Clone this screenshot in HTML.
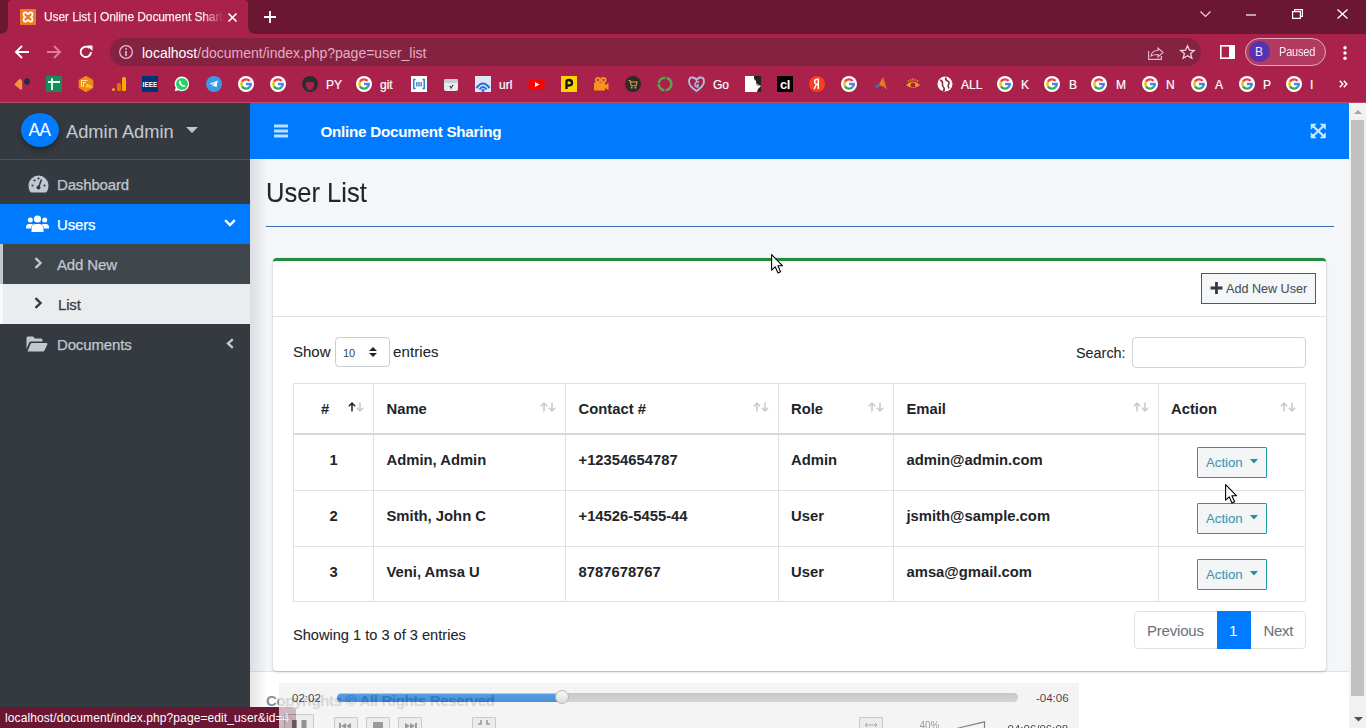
<!DOCTYPE html>
<html><head><meta charset="utf-8">
<style>
*{margin:0;padding:0;box-sizing:border-box}
html,body{width:1366px;height:728px;overflow:hidden;font-family:"Liberation Sans",sans-serif;background:#f4f6f9}
.a{position:absolute}
.t{position:absolute;white-space:nowrap;line-height:1}
svg{position:absolute;overflow:visible}
/* chrome */
#titlebar{left:0;top:0;width:1366px;height:34px;background:#6b1733}
#tab{left:8px;top:0;width:240px;height:34px;background:#aa224c;border-radius:4px 4px 0 0}
#toolbar{left:0;top:34px;width:1366px;height:68px;background:#aa224c}
#omni{left:110px;top:38px;width:1091px;height:28px;background:#842242;border-radius:14px}
#sep{left:0;top:102px;width:1366px;height:1px;background:#b84a67}
.bm{color:#fff;font-size:12px;-webkit-text-stroke:0.2px #fff}
/* page */
#sidebar{left:0;top:103px;width:250px;height:625px;background:#343a40}
#navbar{left:250px;top:103px;width:1099px;height:56px;background:#007bff}
#content{left:250px;top:159px;width:1099px;height:512px;background:#f4f6f9}
#shadow{left:250px;top:159px;width:18px;height:569px;background:linear-gradient(90deg,rgba(0,0,0,.10),rgba(0,0,0,0))}
#scroll{left:1349px;top:103px;width:17px;height:625px;background:#f1f1f1}
#thumb{left:1351px;top:120px;width:13px;height:576px;background:#c1c1c1}
#footer{left:250px;top:671px;width:1099px;height:57px;background:#fff;border-top:1px solid #dee2e6}
.st{-webkit-text-stroke:0.08px currentColor}
.sb{color:#c2c7d0;font-size:15px;letter-spacing:-0.15px;-webkit-text-stroke:0.25px currentColor}
</style></head><body>
<!-- ============ BROWSER CHROME ============ -->
<div id="titlebar" class="a"></div>
<div id="toolbar" class="a"></div>
<div id="tab" class="a"></div>
<!-- tab bottom flares -->
<svg style="left:0;top:26px" width="8" height="8"><path d="M0 8 Q8 8 8 0 L8 8 Z" fill="#aa224c"/></svg>
<svg style="left:248px;top:26px" width="8" height="8"><path d="M8 8 Q0 8 0 0 L0 8 Z" fill="#aa224c"/></svg>
<!-- favicon -->
<svg style="left:20px;top:9px" width="16" height="16" viewBox="0 0 16 16"><rect width="16" height="16" fill="#ef7a22"/><path d="M3.5 5.5 Q3.5 3 6 3.5 L8 5 L10 3.5 Q12.5 3 12.5 5.5 Q12.5 7 11 8 Q12.5 9 12.5 10.5 Q12.5 13 10 12.5 L8 11 L6 12.5 Q3.5 13 3.5 10.5 Q3.5 9 5 8 Q3.5 7 3.5 5.5 Z" fill="none" stroke="#fff" stroke-width="1.8"/></svg>
<div class="t" style="left:44px;top:11px;font-size:12px;color:#fbe9ef;width:180px;overflow:hidden;letter-spacing:-0.1px;-webkit-text-stroke:0.25px #fbe9ef;-webkit-mask-image:linear-gradient(90deg,#000 158px,transparent 180px)">User List | Online Document Sharing</div>
<svg style="left:228px;top:13px" width="9" height="9"><path d="M0.5 0.5L8.5 8.5M8.5 0.5L0.5 8.5" stroke="#fff" stroke-width="1.6"/></svg>
<svg style="left:264px;top:11px" width="12" height="12"><path d="M6 0V12M0 6H12" stroke="#fff" stroke-width="1.8"/></svg>
<!-- window controls -->
<svg style="left:1200px;top:11px" width="11" height="7"><path d="M0.5 0.5L5.5 5.5L10.5 0.5" fill="none" stroke="#f3d7df" stroke-width="1.2"/></svg>
<svg style="left:1246px;top:14px" width="10" height="2"><path d="M0 1H10" stroke="#fff" stroke-width="1.2"/></svg>
<svg style="left:1292px;top:9px" width="11" height="10"><path d="M0.6 2.6H8.4V9.4H0.6Z M2.6 2.6V0.6H10.4V7.4H8.4" fill="none" stroke="#fff" stroke-width="1.2"/></svg>
<svg style="left:1337px;top:9px" width="11" height="10"><path d="M0.5 0.5L10.5 9.5M10.5 0.5L0.5 9.5" stroke="#fff" stroke-width="1.3"/></svg>
<!-- toolbar -->
<svg style="left:15px;top:45px" width="14" height="14"><path d="M7 1L1 7L7 13M1 7H14" fill="none" stroke="#fff" stroke-width="1.9"/></svg>
<svg style="left:47px;top:45px" width="14" height="14"><path d="M7 1L13 7L7 13M13 7H0" fill="none" stroke="#e27a98" stroke-width="1.9"/></svg>
<svg style="left:79px;top:45px" width="14" height="14"><path d="M12 7A5.2 5.2 0 1 1 10.5 3.2" fill="none" stroke="#fff" stroke-width="1.9"/><path d="M8 0.5H13.5V6Z" fill="#fff"/></svg>
<div id="omni" class="a"></div>
<svg style="left:119px;top:45px" width="14" height="14"><circle cx="7" cy="7" r="6.3" fill="none" stroke="#e9bccb" stroke-width="1.3"/><path d="M7 6V11" stroke="#e9bccb" stroke-width="1.6"/><circle cx="7" cy="3.9" r="0.9" fill="#e9bccb"/></svg>
<div class="t" style="left:142px;top:46px;font-size:14px;color:#fff">localhost<span style="color:#e4adc0">/document/index.php?page=user_list</span></div>
<svg style="left:1148px;top:46px" width="16" height="14"><path d="M0.6 5V13.4H13.4V10" fill="none" stroke="#e5b3c3" stroke-width="1.2"/><path d="M3 10Q4 4.5 10 4.5V2L15 6.5L10 11V8.5Q5.5 8.5 3 10Z" fill="none" stroke="#e5b3c3" stroke-width="1.2"/></svg>
<svg style="left:1180px;top:45px" width="15" height="14"><path d="M7.5 0.8L9.5 5.2L14.2 5.5L10.6 8.6L11.8 13.2L7.5 10.7L3.2 13.2L4.4 8.6L0.8 5.5L5.5 5.2Z" fill="none" stroke="#f1d3dc" stroke-width="1.3"/></svg>
<svg style="left:1220px;top:45px" width="15" height="14"><rect x="0.8" y="0.8" width="13.4" height="12.4" fill="none" stroke="#fff" stroke-width="1.6"/><rect x="9" y="1" width="5" height="12" fill="#fff"/></svg>
<div class="a" style="left:1245px;top:38px;width:81px;height:28px;border:1.3px solid #e7a9bd;border-radius:14px;background:#b23a60"></div>
<div class="a" style="left:1249px;top:41px;width:21px;height:21px;border-radius:50%;background:#5533b0"></div>
<div class="t" style="left:1255px;top:46px;font-size:12px;color:#f0e6ff">B</div>
<div class="t" style="left:1279px;top:46px;font-size:12.5px;color:#fbeef3;letter-spacing:-0.2px;transform:scaleX(.88);transform-origin:0 0">Paused</div>
<svg style="left:1343px;top:46px" width="4" height="14"><circle cx="2" cy="1.8" r="1.7" fill="#fff"/><circle cx="2" cy="7" r="1.7" fill="#fff"/><circle cx="2" cy="12.2" r="1.7" fill="#fff"/></svg>
<!-- BOOKMARKS -->
<svg style="left:14px;top:76px" width="16" height="16"><path d="M5 3.2Q6 2.8 7 3.5L8.2 5V12.5Q7.5 14 6.5 13.8L0.8 9Q0.3 8.4 0.9 7.7Z" fill="#f4953e"/><ellipse cx="13" cy="5.5" rx="2.8" ry="3.2" fill="#1d3040"/></svg>
<svg style="left:46px;top:76px" width="16" height="16"><rect width="16" height="16" fill="#1a8a5a"/><path d="M2 6H14M6 2.2V14" stroke="#e8fff4" stroke-width="1.8"/></svg>
<svg style="left:78px;top:76px" width="16" height="16"><path d="M8 0.3L14.8 4.2V11.8L8 15.7L1.2 11.8V4.2Z" fill="#f08c12" stroke="#f08c12" stroke-linejoin="round" stroke-width="1"/><path d="M3.5 11V4.5H9.5M5.5 11V6.5H8" fill="none" stroke="#ffe98a" stroke-width="1.1"/><path d="M9 8V11.5M11 8.5V11.5M13 9.5V11.5" stroke="#ffe98a" stroke-width="1.1"/></svg>
<svg style="left:111px;top:76px" width="16" height="16"><rect x="1" y="12" width="3" height="3" rx="1.5" fill="#f9ab00"/><rect x="6" y="7" width="4" height="8" rx="1.5" fill="#e37400"/><rect x="11" y="1" width="4" height="14" rx="1.5" fill="#f9ab00"/></svg>
<svg style="left:142px;top:76px" width="16" height="16"><rect width="16" height="16" fill="#00337a"/><text x="8" y="11" font-size="6.5" font-family="Liberation Sans" fill="#fff" text-anchor="middle" font-weight="700">IEEE</text></svg>
<svg style="left:174px;top:76px" width="16" height="16"><path d="M8 0.6A7.3 7.3 0 0 0 1.7 11.6L0.8 15.2L4.4 14.3A7.3 7.3 0 1 0 8 0.6Z" fill="#fff"/><circle cx="8" cy="7.9" r="6" fill="#25d366"/><path d="M5.5 4.8Q6.2 4.3 6.6 5.2L7.1 6.3Q7.2 6.7 6.8 7.1Q7.6 8.7 9.1 9.3Q9.5 8.8 9.9 9L11 9.6Q11.5 10 10.8 10.8Q9.8 11.6 7.6 10.3Q5.4 8.8 5 6.8Q4.8 5.4 5.5 4.8Z" fill="#fff"/></svg>
<svg style="left:206px;top:76px" width="16" height="16"><circle cx="8" cy="8" r="8" fill="#3b9ae1"/><path d="M3.4 7.8L11.8 4.4L10.4 11.6L7.6 9.6L6.4 10.8L6.5 8.9L10.3 5.6L5.6 8.5Z" fill="#fff"/></svg>
<svg style="left:238px;top:76px" width="16" height="16" viewBox="0 0 16 16"><circle cx="8" cy="8" r="8" fill="#fff"/><g fill="none" stroke-width="2.4"><path d="M11.56 5.01A4.65 4.65 0 0 0 3.97 5.68" stroke="#ea4335"/><path d="M3.97 5.68A4.65 4.65 0 0 0 3.97 10.33" stroke="#fbbc05"/><path d="M3.97 10.33A4.65 4.65 0 0 0 11.56 10.99" stroke="#34a853"/><path d="M11.56 10.99A4.65 4.65 0 0 0 12.65 8" stroke="#4285f4"/></g><rect x="8" y="6.8" width="5.85" height="2.4" fill="#4285f4"/></svg>
<svg style="left:270px;top:76px" width="16" height="16" viewBox="0 0 16 16"><circle cx="8" cy="8" r="8" fill="#fff"/><g fill="none" stroke-width="2.4"><path d="M11.56 5.01A4.65 4.65 0 0 0 3.97 5.68" stroke="#ea4335"/><path d="M3.97 5.68A4.65 4.65 0 0 0 3.97 10.33" stroke="#fbbc05"/><path d="M3.97 10.33A4.65 4.65 0 0 0 11.56 10.99" stroke="#34a853"/><path d="M11.56 10.99A4.65 4.65 0 0 0 12.65 8" stroke="#4285f4"/></g><rect x="8" y="6.8" width="5.85" height="2.4" fill="#4285f4"/></svg>
<svg style="left:302px;top:76px" width="16" height="16"><circle cx="8" cy="8" r="8" fill="#2b2b30"/><path d="M5.2 13.8V11.6Q3.6 11.5 3.6 9.2Q3.6 8.1 4.3 7.4Q4 6.5 4.4 5.5Q5.3 5.5 6.3 6.2Q8 5.7 9.7 6.2Q10.7 5.5 11.6 5.5Q12 6.5 11.7 7.4Q12.4 8.1 12.4 9.2Q12.4 11.5 10.8 11.6V13.8Z" fill="#a8224b"/></svg>
<div class="t bm" style="left:326px;top:78.5px">PY</div>
<svg style="left:356px;top:76px" width="16" height="16" viewBox="0 0 16 16"><circle cx="8" cy="8" r="8" fill="#fff"/><g fill="none" stroke-width="2.4"><path d="M11.56 5.01A4.65 4.65 0 0 0 3.97 5.68" stroke="#ea4335"/><path d="M3.97 5.68A4.65 4.65 0 0 0 3.97 10.33" stroke="#fbbc05"/><path d="M3.97 10.33A4.65 4.65 0 0 0 11.56 10.99" stroke="#34a853"/><path d="M11.56 10.99A4.65 4.65 0 0 0 12.65 8" stroke="#4285f4"/></g><rect x="8" y="6.8" width="5.85" height="2.4" fill="#4285f4"/></svg>
<div class="t bm" style="left:380px;top:78.5px">git</div>
<svg style="left:411px;top:76px" width="16" height="16"><rect width="16" height="16" fill="#fff"/><path d="M4.5 3.5H2.8V12.5H4.5M11.5 3.5H13.2V12.5H11.5" fill="none" stroke="#2b79c9" stroke-width="1.4"/><path d="M5.8 6V10.5M8 6V10.5M10.2 6V10.5" stroke="#2b79c9" stroke-width="1.3"/></svg>
<svg style="left:443px;top:76px" width="16" height="16"><rect x="1" y="3" width="14" height="12" rx="2" fill="#e8eaf0"/><rect x="1" y="3" width="14" height="4" rx="1.5" fill="#c9cbd6"/><path d="M7 10L8 12L10 9" stroke="#444" stroke-width="1.3" fill="none"/></svg>
<svg style="left:475px;top:76px" width="16" height="16"><rect width="16" height="16" fill="#dfe7f2"/><path d="M1.5 12Q8 3 14.5 12" fill="none" stroke="#2a6de0" stroke-width="2.2"/><path d="M4.5 13.5Q8 8.5 11.5 13.5" fill="none" stroke="#2a6de0" stroke-width="2"/><circle cx="8" cy="14.5" r="1.5" fill="#2a6de0"/></svg>
<div class="t bm" style="left:499px;top:78.5px">url</div>
<svg style="left:528px;top:76px" width="17" height="16"><rect x="0.5" y="3" width="16" height="11" rx="3" fill="#f00"/><path d="M7 6L11.5 8.5L7 11Z" fill="#fff"/></svg>
<svg style="left:561px;top:76px" width="16" height="16"><rect width="16" height="16" fill="#ffd400"/><path d="M5.5 13V5.5Q5.5 4 8 4Q11 4 11 6.8Q11 9.5 8 9.5H6.5" fill="none" stroke="#111" stroke-width="2.3"/></svg>
<svg style="left:593px;top:76px" width="16" height="16"><circle cx="5" cy="4" r="3" fill="#f7931e"/><circle cx="10.5" cy="4" r="3" fill="#f7931e"/><rect x="1" y="6.5" width="11" height="8" fill="#f7931e"/><path d="M12 9L15.5 7V14L12 12Z" fill="#f7931e"/><circle cx="5" cy="4" r="1.1" fill="#a8224b"/><circle cx="10.5" cy="4" r="1.1" fill="#a8224b"/></svg>
<svg style="left:625px;top:76px" width="16" height="16"><circle cx="8" cy="8" r="8" fill="#2d2a2e"/><path d="M3.5 4.5H5L6.3 9.8H11L12 6H5.6" fill="none" stroke="#e8a13a" stroke-width="1.1"/><circle cx="6.8" cy="11.7" r="0.9" fill="#e8a13a"/><circle cx="10.5" cy="11.7" r="0.9" fill="#e8a13a"/></svg>
<svg style="left:657px;top:76px" width="16" height="16"><circle cx="8" cy="8" r="6.3" fill="none" stroke="#5ea24e" stroke-width="2.6" stroke-dasharray="9 1.2"/></svg>
<svg style="left:688px;top:76px" width="17" height="16"><path d="M8.5 15Q1 10 1 5.5Q1 1 5 1.5Q7.3 2 8.5 4Q9.7 2 12 1.5Q16 1 16 5.5Q16 10 8.5 15Z" fill="none" stroke="#aac6e4" stroke-width="1.8"/><path d="M11 6Q8 5 7 8Q6.5 11 10 11V9H8.5" fill="none" stroke="#aac6e4" stroke-width="1.4"/></svg>
<div class="t bm" style="left:713px;top:78.5px">Go</div>
<svg style="left:745px;top:76px" width="16" height="16"><rect width="16" height="16" fill="#fff"/><path d="M9 0H16V16H12Q13 12 16 10L11 8Q12 5 9 3Z" fill="#222"/><path d="M11 7L16 10L12 10Z" fill="#e0a020"/></svg>
<svg style="left:777px;top:76px" width="16" height="16"><rect width="16" height="16" fill="#000"/><text x="8" y="13" font-size="13" font-family="Liberation Sans" font-weight="700" fill="#fff" text-anchor="middle" letter-spacing="-0.5">cl</text></svg>
<svg style="left:809px;top:76px" width="16" height="16"><circle cx="8" cy="8" r="8" fill="#fc3f1d"/><path d="M9.3 13V3.2H8.3Q5.6 3.2 5.6 5.8Q5.6 7.8 7.4 8.3L5.2 13M9.3 8.4H8" fill="none" stroke="#fff" stroke-width="1.5"/></svg>
<svg style="left:841px;top:76px" width="16" height="16" viewBox="0 0 16 16"><circle cx="8" cy="8" r="8" fill="#fff"/><g fill="none" stroke-width="2.4"><path d="M11.56 5.01A4.65 4.65 0 0 0 3.97 5.68" stroke="#ea4335"/><path d="M3.97 5.68A4.65 4.65 0 0 0 3.97 10.33" stroke="#fbbc05"/><path d="M3.97 10.33A4.65 4.65 0 0 0 11.56 10.99" stroke="#34a853"/><path d="M11.56 10.99A4.65 4.65 0 0 0 12.65 8" stroke="#4285f4"/></g><rect x="8" y="6.8" width="5.85" height="2.4" fill="#4285f4"/></svg>
<svg style="left:873px;top:76px" width="15" height="16"><path d="M1 10L6 8L8 10L4 12Z" fill="#3e6fb6"/><path d="M6 8L10 1Q12 6 14 14Q11 10 8 10Z" fill="#e07a1f"/></svg>
<svg style="left:905px;top:76px" width="16" height="16"><path d="M1 9Q8 2 15 9Q8 15 1 9Z" fill="#f0a020"/><circle cx="8" cy="9" r="2.5" fill="#b01f3c"/><path d="M3 4L4 6M8 2V4.5M13 4L12 6M5.5 3L6 5M10.5 3L10 5" stroke="#f0a020" stroke-width="1"/></svg>
<svg style="left:937px;top:76px" width="16" height="16"><circle cx="8" cy="8" r="7.5" fill="#fff"/><path d="M3 4Q6 5 5.5 8Q5 10 7 12Q8 14 6 15M9 1.5Q8 4 10.5 5Q13 6 11.5 8.5Q10.5 10 12 12.5" fill="none" stroke="#8a2748" stroke-width="1.6"/></svg>
<div class="t bm" style="left:961px;top:78.5px">ALL</div>
<svg style="left:997px;top:76px" width="16" height="16" viewBox="0 0 16 16"><circle cx="8" cy="8" r="8" fill="#fff"/><g fill="none" stroke-width="2.4"><path d="M11.56 5.01A4.65 4.65 0 0 0 3.97 5.68" stroke="#ea4335"/><path d="M3.97 5.68A4.65 4.65 0 0 0 3.97 10.33" stroke="#fbbc05"/><path d="M3.97 10.33A4.65 4.65 0 0 0 11.56 10.99" stroke="#34a853"/><path d="M11.56 10.99A4.65 4.65 0 0 0 12.65 8" stroke="#4285f4"/></g><rect x="8" y="6.8" width="5.85" height="2.4" fill="#4285f4"/></svg>
<div class="t bm" style="left:1021px;top:78.5px">K</div>
<svg style="left:1044px;top:76px" width="16" height="16" viewBox="0 0 16 16"><circle cx="8" cy="8" r="8" fill="#fff"/><g fill="none" stroke-width="2.4"><path d="M11.56 5.01A4.65 4.65 0 0 0 3.97 5.68" stroke="#ea4335"/><path d="M3.97 5.68A4.65 4.65 0 0 0 3.97 10.33" stroke="#fbbc05"/><path d="M3.97 10.33A4.65 4.65 0 0 0 11.56 10.99" stroke="#34a853"/><path d="M11.56 10.99A4.65 4.65 0 0 0 12.65 8" stroke="#4285f4"/></g><rect x="8" y="6.8" width="5.85" height="2.4" fill="#4285f4"/></svg>
<div class="t bm" style="left:1069px;top:78.5px">B</div>
<svg style="left:1091px;top:76px" width="16" height="16" viewBox="0 0 16 16"><circle cx="8" cy="8" r="8" fill="#fff"/><g fill="none" stroke-width="2.4"><path d="M11.56 5.01A4.65 4.65 0 0 0 3.97 5.68" stroke="#ea4335"/><path d="M3.97 5.68A4.65 4.65 0 0 0 3.97 10.33" stroke="#fbbc05"/><path d="M3.97 10.33A4.65 4.65 0 0 0 11.56 10.99" stroke="#34a853"/><path d="M11.56 10.99A4.65 4.65 0 0 0 12.65 8" stroke="#4285f4"/></g><rect x="8" y="6.8" width="5.85" height="2.4" fill="#4285f4"/></svg>
<div class="t bm" style="left:1116px;top:78.5px">M</div>
<svg style="left:1142px;top:76px" width="16" height="16" viewBox="0 0 16 16"><circle cx="8" cy="8" r="8" fill="#fff"/><g fill="none" stroke-width="2.4"><path d="M11.56 5.01A4.65 4.65 0 0 0 3.97 5.68" stroke="#ea4335"/><path d="M3.97 5.68A4.65 4.65 0 0 0 3.97 10.33" stroke="#fbbc05"/><path d="M3.97 10.33A4.65 4.65 0 0 0 11.56 10.99" stroke="#34a853"/><path d="M11.56 10.99A4.65 4.65 0 0 0 12.65 8" stroke="#4285f4"/></g><rect x="8" y="6.8" width="5.85" height="2.4" fill="#4285f4"/></svg>
<div class="t bm" style="left:1166px;top:78.5px">N</div>
<svg style="left:1191px;top:76px" width="16" height="16" viewBox="0 0 16 16"><circle cx="8" cy="8" r="8" fill="#fff"/><g fill="none" stroke-width="2.4"><path d="M11.56 5.01A4.65 4.65 0 0 0 3.97 5.68" stroke="#ea4335"/><path d="M3.97 5.68A4.65 4.65 0 0 0 3.97 10.33" stroke="#fbbc05"/><path d="M3.97 10.33A4.65 4.65 0 0 0 11.56 10.99" stroke="#34a853"/><path d="M11.56 10.99A4.65 4.65 0 0 0 12.65 8" stroke="#4285f4"/></g><rect x="8" y="6.8" width="5.85" height="2.4" fill="#4285f4"/></svg>
<div class="t bm" style="left:1215px;top:78.5px">A</div>
<svg style="left:1239px;top:76px" width="16" height="16" viewBox="0 0 16 16"><circle cx="8" cy="8" r="8" fill="#fff"/><g fill="none" stroke-width="2.4"><path d="M11.56 5.01A4.65 4.65 0 0 0 3.97 5.68" stroke="#ea4335"/><path d="M3.97 5.68A4.65 4.65 0 0 0 3.97 10.33" stroke="#fbbc05"/><path d="M3.97 10.33A4.65 4.65 0 0 0 11.56 10.99" stroke="#34a853"/><path d="M11.56 10.99A4.65 4.65 0 0 0 12.65 8" stroke="#4285f4"/></g><rect x="8" y="6.8" width="5.85" height="2.4" fill="#4285f4"/></svg>
<div class="t bm" style="left:1263px;top:78.5px">P</div>
<svg style="left:1286px;top:76px" width="16" height="16" viewBox="0 0 16 16"><circle cx="8" cy="8" r="8" fill="#fff"/><g fill="none" stroke-width="2.4"><path d="M11.56 5.01A4.65 4.65 0 0 0 3.97 5.68" stroke="#ea4335"/><path d="M3.97 5.68A4.65 4.65 0 0 0 3.97 10.33" stroke="#fbbc05"/><path d="M3.97 10.33A4.65 4.65 0 0 0 11.56 10.99" stroke="#34a853"/><path d="M11.56 10.99A4.65 4.65 0 0 0 12.65 8" stroke="#4285f4"/></g><rect x="8" y="6.8" width="5.85" height="2.4" fill="#4285f4"/></svg>
<div class="t bm" style="left:1310px;top:78.5px">I</div>
<svg style="left:1339px;top:80px" width="9" height="8"><path d="M0.8 0.8L3.8 4L0.8 7.2M4.8 0.8L7.8 4L4.8 7.2" fill="none" stroke="#fff" stroke-width="1.5"/></svg>
<div id="sep" class="a"></div>

<!-- ============ PAGE ============ -->
<div id="sidebar" class="a"></div>
<div id="navbar" class="a"></div>
<div id="content" class="a"></div>
<div id="footer" class="a"></div>
<div id="shadow" class="a"></div>
<!-- sidebar user panel -->
<div class="a" style="left:0;top:159px;width:250px;height:1px;background:#4b545c"></div>
<div class="a" style="left:21px;top:112.5px;width:38px;height:34px;border-radius:50%;background:#007bff;box-shadow:0 3px 6px rgba(0,0,0,.35)"></div>
<div class="t" style="left:28.5px;top:122px;font-size:17.5px;color:#fff;letter-spacing:-0.8px">AA</div>
<div class="t st" style="left:66px;top:123px;font-size:18.3px;color:#c2c7d0">Admin Admin</div>
<svg style="left:186px;top:127px" width="12" height="6"><path d="M0 0H12L6 6Z" fill="#c2c7d0"/></svg>
<!-- nav -->
<div class="t sb" style="left:57px;top:177px">Dashboard</div>
<svg style="left:28px;top:175px" width="21" height="18" viewBox="0 0 21 18"><path d="M10.5 0.5A10 10 0 0 0 0.5 10.5Q0.5 14 2 16.5Q2.5 17.5 3.5 17.5H17.5Q18.5 17.5 19 16.5Q20.5 14 20.5 10.5A10 10 0 0 0 10.5 0.5Z" fill="#c2c7d0"/><circle cx="10.5" cy="12.5" r="2" fill="#343a40"/><path d="M10.5 12.5L13.5 4.5" stroke="#343a40" stroke-width="1.6"/><circle cx="4.5" cy="10.5" r="1.1" fill="#343a40"/><circle cx="6.5" cy="5.5" r="1.1" fill="#343a40"/><circle cx="10.5" cy="3.5" r="1.1" fill="#343a40"/><circle cx="16.5" cy="10.5" r="1.1" fill="#343a40"/></svg>
<div class="a" style="left:0;top:204px;width:250px;height:40px;background:#007bff"></div>
<svg style="left:26px;top:215px" width="23" height="17" viewBox="0 0 23 17"><circle cx="11.5" cy="4" r="3.6" fill="#fff"/><circle cx="4.3" cy="5" r="2.5" fill="#fff"/><circle cx="18.7" cy="5" r="2.5" fill="#fff"/><path d="M5.5 17V13.5Q5.5 9 10 9H13Q17.5 9 17.5 13.5V17Z" fill="#fff"/><path d="M0 12.5Q0 9 3 9H5.5Q7 9 7.3 9.6Q5 11 4.8 13.5H0Z" fill="#fff"/><path d="M23 12.5Q23 9 20 9H17.5Q16 9 15.7 9.6Q18 11 18.2 13.5H23Z" fill="#fff"/></svg>
<div class="t sb" style="left:57px;top:217px;color:#fff">Users</div>
<svg style="left:224px;top:219px" width="12" height="8"><path d="M1.2 1.2L6 6L10.8 1.2" fill="none" stroke="#fff" stroke-width="2.4"/></svg>
<div class="a" style="left:0;top:244px;width:250px;height:40px;background:#3f464c"></div>
<div class="a" style="left:0;top:244px;width:3px;height:40px;background:#c5c8cb"></div>
<svg style="left:34px;top:257px" width="9" height="12"><path d="M1.5 1.2L6.5 6L1.5 10.8" fill="none" stroke="#c2c7d0" stroke-width="2.4"/></svg>
<div class="t sb" style="left:57px;top:257px">Add New</div>
<div class="a" style="left:0;top:284px;width:250px;height:40px;background:#ebeced"></div>
<div class="a" style="left:0;top:284px;width:3px;height:40px;background:#f8f9fa"></div>
<svg style="left:34px;top:297px" width="9" height="12"><path d="M1.5 1.2L6.5 6L1.5 10.8" fill="none" stroke="#343a40" stroke-width="2.4"/></svg>
<div class="t sb" style="left:58px;top:297px;color:#343a40">List</div>
<svg style="left:26px;top:336px" width="22" height="16" viewBox="0 0 22 16"><path d="M0.5 13V2Q0.5 0.5 2 0.5H7L9 2.5H15Q16.5 2.5 16.5 4V5.5H5Q3.8 5.5 3.2 6.6L0.5 13Z" fill="#c2c7d0"/><path d="M1.5 15.5L4.5 8Q5 7 6 7H20.5Q22 7 21.3 8.5L18.5 14.5Q18 15.5 17 15.5Z" fill="#c2c7d0"/></svg>
<div class="t sb" style="left:57px;top:337px">Documents</div>
<svg style="left:226px;top:338px" width="8" height="11"><path d="M6.8 1.2L2 5.5L6.8 9.8" fill="none" stroke="#c2c7d0" stroke-width="2.4"/></svg>
<!-- navbar -->
<svg style="left:274px;top:124px" width="14" height="14"><path d="M0 2H14M0 7H14M0 12H14" stroke="#b4e2ff" stroke-width="2.8"/></svg>
<div class="t" style="left:320.5px;top:124px;font-size:15.2px;font-weight:700;color:#fff;letter-spacing:-0.25px">Online Document Sharing</div>
<svg style="left:1311px;top:124px" width="14.5" height="14" viewBox="0 0 14.5 14"><path d="M0 0H5.2L0 5.2Z M14.5 0H9.3L14.5 5.2Z M0 14H5.2L0 8.8Z M14.5 14H9.3L14.5 8.8Z" fill="#c4e8ff" stroke="#c4e8ff" stroke-width="0.6" stroke-linejoin="round"/><path d="M1.5 1.5L13 12.5M13 1.5L1.5 12.5" stroke="#c4e8ff" stroke-width="2.3"/></svg>
<!-- content header -->
<div class="t st" style="left:266px;top:178.5px;font-size:28px;color:#212529;transform:scaleX(.912);transform-origin:0 0">User List</div>
<div class="a" style="left:266px;top:226px;width:1068px;height:1px;background:#3a6fae"></div>
<!-- card -->
<div class="a" style="left:273px;top:258px;width:1053px;height:413px;background:#fff;border-radius:4px;border-top:3px solid #228b3f;box-shadow:0 0 1px rgba(0,0,0,.125),0 1px 3px rgba(0,0,0,.2)"></div>
<div class="a" style="left:273px;top:316px;width:1053px;height:1px;background:#dfe1e4"></div>
<div class="a" style="left:1201px;top:273px;width:115px;height:31px;background:#f4f6f8;border:1.6px solid #1e62b4;border-radius:0"></div>
<svg style="left:1210px;top:282px" width="13" height="12"><path d="M6.5 0V12M0.5 6H12.5" stroke="#343a40" stroke-width="2.8"/></svg>
<div class="t st" style="left:1226px;top:283px;font-size:12.6px;color:#495057">Add New User</div>
<!-- CARDBODY -->
<div class="t st" style="left:293px;top:343.5px;font-size:15px;color:#212529">Show</div>
<div class="a" style="left:335px;top:337px;width:55px;height:30px;border:1px solid #c9cdd1;border-radius:4px;background:#fff"></div>
<div class="t" style="left:343px;top:347.5px;font-size:11px;color:#3a3f44">10</div>
<svg style="left:369px;top:347px" width="8" height="10"><path d="M0 4H8L4 0Z M0 6H8L4 10Z" fill="#212529"/></svg>
<div class="t st" style="left:393px;top:343.5px;font-size:15px;color:#212529;letter-spacing:0.1px">entries</div>
<div class="t st" style="left:1076px;top:346px;font-size:14.4px;color:#212529">Search:</div>
<div class="a" style="left:1132px;top:337px;width:174px;height:31px;border:1px solid #ced4da;border-radius:4px;background:#fff"></div>
<div class="a" style="left:293px;top:383px;width:1013px;height:219px;background:#fff;border:1px solid #dee2e6"></div>
<div class="a" style="left:373px;top:383px;width:1px;height:219px;background:#dee2e6"></div>
<div class="a" style="left:565px;top:383px;width:1px;height:219px;background:#dee2e6"></div>
<div class="a" style="left:778px;top:383px;width:1px;height:219px;background:#dee2e6"></div>
<div class="a" style="left:893px;top:383px;width:1px;height:219px;background:#dee2e6"></div>
<div class="a" style="left:1158px;top:383px;width:1px;height:219px;background:#dee2e6"></div>
<div class="a" style="left:293px;top:433px;width:1013px;height:2px;background:#d6d9dc"></div>
<div class="a" style="left:293px;top:490px;width:1013px;height:1px;background:#dee2e6"></div>
<div class="a" style="left:293px;top:546px;width:1013px;height:1px;background:#dee2e6"></div>
<div class="t" style="left:321px;top:401.5px;font-size:14.8px;font-weight:700;color:#212529">#</div>
<div class="t" style="left:386.5px;top:401.5px;font-size:14.8px;font-weight:700;color:#212529">Name</div>
<div class="t" style="left:578.5px;top:401.5px;font-size:14.8px;font-weight:700;color:#212529">Contact #</div>
<div class="t" style="left:791px;top:401.5px;font-size:14.8px;font-weight:700;color:#212529">Role</div>
<div class="t" style="left:906.5px;top:401.5px;font-size:14.8px;font-weight:700;color:#212529">Email</div>
<div class="t" style="left:1171px;top:401.5px;font-size:14.8px;font-weight:700;color:#212529">Action</div>
<svg style="left:348px;top:402px" width="16" height="10"><path d="M4 9.5V1M0.8 4.2L4 1L7.2 4.2" fill="none" stroke="#212529" stroke-width="1.5"/><path d="M12 0.5V9M8.8 5.8L12 9L15.2 5.8" fill="none" stroke="#c6c8ca" stroke-width="1.5"/></svg>
<svg style="left:540px;top:402px" width="16" height="10"><path d="M4 9.5V1M0.8 4.2L4 1L7.2 4.2" fill="none" stroke="#c6c8ca" stroke-width="1.5"/><path d="M12 0.5V9M8.8 5.8L12 9L15.2 5.8" fill="none" stroke="#c6c8ca" stroke-width="1.5"/></svg>
<svg style="left:752.5px;top:402px" width="16" height="10"><path d="M4 9.5V1M0.8 4.2L4 1L7.2 4.2" fill="none" stroke="#c6c8ca" stroke-width="1.5"/><path d="M12 0.5V9M8.8 5.8L12 9L15.2 5.8" fill="none" stroke="#c6c8ca" stroke-width="1.5"/></svg>
<svg style="left:868px;top:402px" width="16" height="10"><path d="M4 9.5V1M0.8 4.2L4 1L7.2 4.2" fill="none" stroke="#c6c8ca" stroke-width="1.5"/><path d="M12 0.5V9M8.8 5.8L12 9L15.2 5.8" fill="none" stroke="#c6c8ca" stroke-width="1.5"/></svg>
<svg style="left:1133px;top:402px" width="16" height="10"><path d="M4 9.5V1M0.8 4.2L4 1L7.2 4.2" fill="none" stroke="#c6c8ca" stroke-width="1.5"/><path d="M12 0.5V9M8.8 5.8L12 9L15.2 5.8" fill="none" stroke="#c6c8ca" stroke-width="1.5"/></svg>
<svg style="left:1280px;top:402px" width="16" height="10"><path d="M4 9.5V1M0.8 4.2L4 1L7.2 4.2" fill="none" stroke="#c6c8ca" stroke-width="1.5"/><path d="M12 0.5V9M8.8 5.8L12 9L15.2 5.8" fill="none" stroke="#c6c8ca" stroke-width="1.5"/></svg>
<div class="t" style="left:329.5px;top:453px;font-size:14.8px;font-weight:700;color:#212529">1</div>
<div class="t" style="left:386.5px;top:453px;font-size:14.8px;font-weight:700;color:#212529">Admin, Admin</div>
<div class="t" style="left:578.5px;top:453px;font-size:14.8px;font-weight:700;color:#212529">+12354654787</div>
<div class="t" style="left:791px;top:453px;font-size:14.8px;font-weight:700;color:#212529">Admin</div>
<div class="t" style="left:906.5px;top:453px;font-size:14.8px;font-weight:700;color:#212529">admin@admin.com</div>
<div class="a" style="left:1197px;top:447px;width:70px;height:31px;border:1.4px solid #1d9bae;background:#f3f5f7;border-radius:1px"></div>
<div class="t st" style="left:1206px;top:456px;font-size:13.2px;color:#3a9aac">Action</div>
<svg style="left:1250px;top:459px" width="8" height="5"><path d="M0 0H8L4 4.5Z" fill="#1a93a6"/></svg>
<div class="t" style="left:329.5px;top:509px;font-size:14.8px;font-weight:700;color:#212529">2</div>
<div class="t" style="left:386.5px;top:509px;font-size:14.8px;font-weight:700;color:#212529">Smith, John C</div>
<div class="t" style="left:578.5px;top:509px;font-size:14.8px;font-weight:700;color:#212529">+14526-5455-44</div>
<div class="t" style="left:791px;top:509px;font-size:14.8px;font-weight:700;color:#212529">User</div>
<div class="t" style="left:906.5px;top:509px;font-size:14.8px;font-weight:700;color:#212529">jsmith@sample.com</div>
<div class="a" style="left:1197px;top:503px;width:70px;height:31px;border:1.4px solid #1d9bae;background:#f3f5f7;border-radius:1px"></div>
<div class="t st" style="left:1206px;top:512px;font-size:13.2px;color:#3a9aac">Action</div>
<svg style="left:1250px;top:515px" width="8" height="5"><path d="M0 0H8L4 4.5Z" fill="#1a93a6"/></svg>
<div class="t" style="left:329.5px;top:565px;font-size:14.8px;font-weight:700;color:#212529">3</div>
<div class="t" style="left:386.5px;top:565px;font-size:14.8px;font-weight:700;color:#212529">Veni, Amsa U</div>
<div class="t" style="left:578.5px;top:565px;font-size:14.8px;font-weight:700;color:#212529">8787678767</div>
<div class="t" style="left:791px;top:565px;font-size:14.8px;font-weight:700;color:#212529">User</div>
<div class="t" style="left:906.5px;top:565px;font-size:14.8px;font-weight:700;color:#212529">amsa@gmail.com</div>
<div class="a" style="left:1197px;top:559px;width:70px;height:31px;border:1.4px solid #1d9bae;background:#f3f5f7;border-radius:1px"></div>
<div class="t st" style="left:1206px;top:568px;font-size:13.2px;color:#3a9aac">Action</div>
<svg style="left:1250px;top:571px" width="8" height="5"><path d="M0 0H8L4 4.5Z" fill="#1a93a6"/></svg>
<div class="t st" style="left:293px;top:628px;font-size:14.6px;color:#212529">Showing 1 to 3 of 3 entries</div>
<div class="a" style="left:1134px;top:611px;width:172px;height:38px;border:1px solid #dee2e6;border-radius:4px;background:#fff"></div>
<div class="a" style="left:1217px;top:611px;width:34px;height:38px;background:#007bff"></div>
<div class="t st" style="left:1147px;top:623px;font-size:15px;color:#6c757d;letter-spacing:-0.2px">Previous</div>
<div class="t" style="left:1229px;top:623px;font-size:15px;color:#fff">1</div>
<div class="t st" style="left:1263.5px;top:623px;font-size:15px;color:#6c757d;letter-spacing:-0.3px">Next</div>
<!-- /CARDBODY -->
<!-- FOOT -->
<div class="t" style="left:266px;top:693px;font-size:15px;font-weight:700;color:#869099;letter-spacing:-0.35px">Copyrights © All Rights Reserved</div>
<div class="a" style="left:0;top:707px;width:296px;height:21px;background:#6b1733;border-radius:0 4px 0 0"></div>
<div class="t" style="left:5px;top:712px;font-size:12px;color:#fff;letter-spacing:0.1px">localhost/document/index.php?page=edit_user&amp;id=4</div>
<div class="a" style="left:279px;top:683px;width:800px;height:45px;opacity:.74"><div class="a" style="left:0;top:0;width:800px;height:45px;background:#f1f1f1"></div>
<div class="t" style="left:13px;top:10px;font-size:11.5px;color:#000">02:02</div>
<div class="a" style="left:58px;top:10px;width:681px;height:9px;border-radius:4.5px;background:linear-gradient(#b4b4b4,#c6c6c6)"></div>
<div class="a" style="left:58px;top:11px;width:226px;height:8px;border-radius:4px;background:linear-gradient(#1a7ad8,#0e66c4)"></div>
<div class="a" style="left:276px;top:7px;width:14px;height:14px;border-radius:50%;background:linear-gradient(#f5f5f5,#d0d0d0);border:1px solid #9a9a9a"></div>
<div class="t" style="left:757px;top:10px;font-size:11.5px;color:#000">-04:06</div>
<div class="a" style="left:5px;top:31px;width:30px;height:18px;border:1px solid #b8b8b8;background:#e6e6e6;border-radius:1px"></div>
<div class="a" style="left:55px;top:34px;width:24px;height:15px;border:1px solid #b8b8b8;background:#e6e6e6;border-radius:1px"></div>
<div class="a" style="left:87px;top:34px;width:24px;height:15px;border:1px solid #b8b8b8;background:#e6e6e6;border-radius:1px"></div>
<div class="a" style="left:119px;top:34px;width:24px;height:15px;border:1px solid #b8b8b8;background:#e6e6e6;border-radius:1px"></div>
<div class="a" style="left:193px;top:34px;width:24px;height:15px;border:1px solid #b8b8b8;background:#e6e6e6;border-radius:1px"></div>
<div class="a" style="left:580px;top:34px;width:24px;height:15px;border:1px solid #b8b8b8;background:#e6e6e6;border-radius:1px"></div>
<svg style="left:13px;top:37px" width="15" height="9"><rect x="0" y="0" width="5" height="9" fill="#6a6a6a"/><rect x="9.5" y="0" width="5" height="9" fill="#6a6a6a"/></svg>
<svg style="left:60px;top:40px" width="14" height="6"><path d="M0 0H2V6H0Z M2 3L7 0V6Z M7 3L12 0V6Z" fill="#777"/></svg>
<svg style="left:94px;top:39px" width="10" height="6"><rect width="10" height="6" fill="#777"/></svg>
<svg style="left:124px;top:40px" width="14" height="6"><path d="M12 0H14V6H12Z M12 3L7 0V6Z M7 3L2 0V6Z" fill="#777"/></svg>
<svg style="left:199px;top:37px" width="12" height="8"><path d="M3 0V4H0 M9 0V4H12" fill="none" stroke="#777" stroke-width="1.6"/></svg>
<svg style="left:584px;top:39px" width="16" height="6"><path d="M2 3H14M4 1L2 3L4 5M12 1L14 3L12 5" fill="none" stroke="#888" stroke-width="1"/></svg>
<div class="t" style="left:640.5px;top:38px;font-size:10px;color:#777">40%</div>
<svg style="left:677px;top:38px" width="30" height="8"><path d="M0.5 7.5L28.5 0.8V8" fill="none" stroke="#555" stroke-width="1.2"/></svg>
<div class="t" style="left:728.5px;top:41px;font-size:11.5px;color:#000">04:06/06:08</div></div>
<!-- /FOOT -->
<div id="scroll" class="a"></div>
<div id="thumb" class="a"></div>
<svg style="left:1354px;top:110px" width="8" height="4"><path d="M0 4H8L4 0Z" fill="#a3a3a3"/></svg>
<svg style="left:1353.5px;top:717px" width="9" height="4.5"><path d="M0 0H9L4.5 4.5Z" fill="#505050"/></svg>
<!-- CURSORS -->
<svg style="left:771px;top:254px" width="13" height="20" viewBox="0 0 13 20"><path d="M0.6 0.6V16.2L4.2 12.8L7 18.9L9.6 17.8L6.9 11.8H11.6Z" fill="#fff" stroke="#000" stroke-width="1.1" stroke-linejoin="round"/></svg>
<svg style="left:1225px;top:484px" width="13" height="20" viewBox="0 0 13 20"><path d="M0.6 0.6V16.2L4.2 12.8L7 18.9L9.6 17.8L6.9 11.8H11.6Z" fill="#fff" stroke="#000" stroke-width="1.1" stroke-linejoin="round"/></svg>
</body></html>
